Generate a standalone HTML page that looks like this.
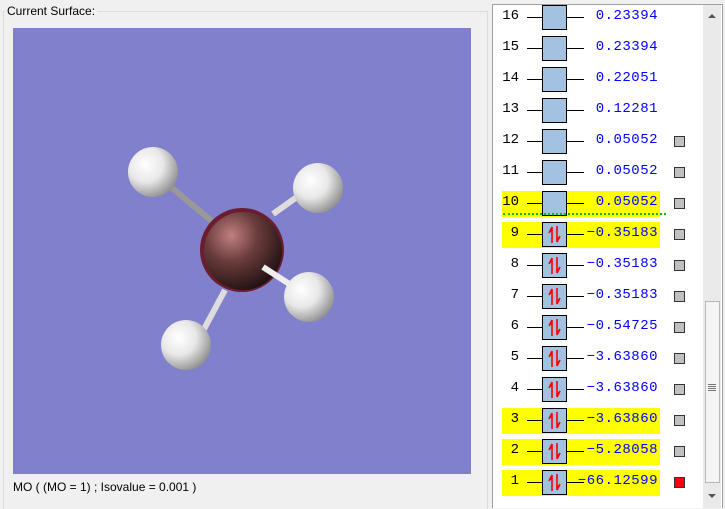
<!DOCTYPE html>
<html><head><style>
body{margin:0;width:725px;height:507px;background:#f0f0f0;position:relative;overflow:hidden;font-family:"Liberation Sans",sans-serif;}
.abs{position:absolute}
.row{position:absolute;left:0;width:210px;height:31px}
.num{position:absolute;left:0;width:26px;text-align:right;font:14px "Liberation Mono",monospace;color:#000;top:6px}
.val{position:absolute;left:0;width:165px;text-align:right;font:14px "Liberation Mono",monospace;color:#0000ff;top:6px;letter-spacing:0.5px}
.hl{position:absolute;left:9px;width:158px;top:3px;height:26px;background:#ffff00}
.ln{position:absolute;left:34px;width:57px;top:15px;height:1px;background:#000}
.box{position:absolute;left:49px;top:3px;width:23px;height:23px;background:#a3c1e0;border:1px solid #000}
.chk{position:absolute;left:181px;top:10px;width:9px;height:9px;background:#c0c0c0;border:1px solid #333}
</style></head><body>
<div class="abs" style="left:3px;top:11px;width:483px;height:497px;border:1px solid #dcdcdc;border-bottom:none"></div>
<div class="abs" style="left:5px;top:4px;background:#f0f0f0;padding:0 2px;font-size:12px">Current Surface:</div>
<svg class="abs" style="left:13px;top:28px" width="458" height="446">
<defs>
<radialGradient id="h" cx="0.35" cy="0.35" r="0.7"><stop offset="0" stop-color="#fff"/><stop offset="0.5" stop-color="#e8e8e8"/><stop offset="1" stop-color="#909090"/></radialGradient>
<radialGradient id="c" cx="0.35" cy="0.3" r="0.75"><stop offset="0" stop-color="#c08080"/><stop offset="0.45" stop-color="#6a3c3c"/><stop offset="1" stop-color="#201010"/></radialGradient>
</defs>
<rect width="458" height="446" fill="#8080cc"/>
<line x1="140" y1="144" x2="213" y2="205" stroke="#999" stroke-width="6"/>
<circle cx="140" cy="144" r="25" fill="url(#h)"/>
<circle cx="229" cy="222" r="42" fill="#6a1d30"/>
<circle cx="230" cy="223" r="39" fill="url(#c)"/>
<line x1="260" y1="186" x2="305" y2="154" stroke="#ddd" stroke-width="6"/>
<circle cx="305" cy="160" r="25" fill="url(#h)"/>
<line x1="250" y1="239" x2="295" y2="268" stroke="#eee" stroke-width="6"/>
<circle cx="296" cy="269" r="25" fill="url(#h)"/>
<line x1="212" y1="262" x2="190" y2="303" stroke="#ddd" stroke-width="6"/>
<circle cx="173" cy="317" r="25" fill="url(#h)"/>
</svg>
<div class="abs" style="left:13px;top:480px;font-size:12px;color:#000">MO ( (MO = 1) ; Isovalue = 0.001 )</div>
<div class="abs" style="left:492px;top:4px;width:229px;height:503px;background:#fff;border:1px solid #a0a0a0;border-bottom:none;overflow:hidden">
<div id="list" class="abs" style="left:0;top:-7px;width:210px;height:520px"></div>
<div class="abs" style="left:210px;top:0;width:18px;height:503px;background:#eaeaea">
<div class="abs" style="left:2px;top:296px;width:13px;height:180px;background:#f4f4f4;border:1px solid #b8b8b8"></div>
<div class="abs" style="left:5px;top:379px;width:8px;height:1px;background:#777;box-shadow:0 2px #777,0 4px #777,0 6px #777"></div>
<div class="abs" style="left:5px;top:9px;width:0;height:0;border:4px solid transparent;border-bottom:4px solid #555;border-top:none"></div>
<div class="abs" style="left:5px;top:489px;width:0;height:0;border:4px solid transparent;border-top:4px solid #555;border-bottom:none"></div>
</div>
</div>
<script>
var vals={16:"0.23394",15:"0.23394",14:"0.22051",13:"0.12281",12:"0.05052",11:"0.05052",10:"0.05052",9:"\u22120.35183",8:"\u22120.35183",7:"\u22120.35183",6:"\u22120.54725",5:"\u22123.63860",4:"\u22123.63860",3:"\u22123.63860",2:"\u22125.28058",1:"\u221266.12599"};
var hl=[10,9,3,2,1];var h="";
var arrows='<svg width="23" height="23" style="position:absolute;left:0;top:0"><path d="M9 4 L9 20 M9 4 L6 10 M9 4 L7 9" stroke="#f00" stroke-width="1.6" fill="none"/><path d="M14 3 L14 19 M14 19 L17 13 M14 19 L16 14" stroke="#f00" stroke-width="1.6" fill="none"/></svg>';
for(var i=16;i>=1;i--){var t=4+(16-i)*31;
h+='<div class="row" style="top:'+t+'px">'+(hl.indexOf(i)>=0?'<div class="hl"></div>':'')+'<div class="num">'+i+'</div><div class="ln"></div><div class="box">'+(i<=9?arrows:'')+'</div><div class="val">'+vals[i]+'</div>'+(i<=12?'<div class="chk" style="'+(i==1?'background:#f00':'')+'"></div>':'')+'</div>';}
h+='<div class="abs" style="left:10px;top:215px;width:163px;border-top:2px dotted #00c000"></div>';
document.getElementById("list").innerHTML=h;
</script>
</body></html>
